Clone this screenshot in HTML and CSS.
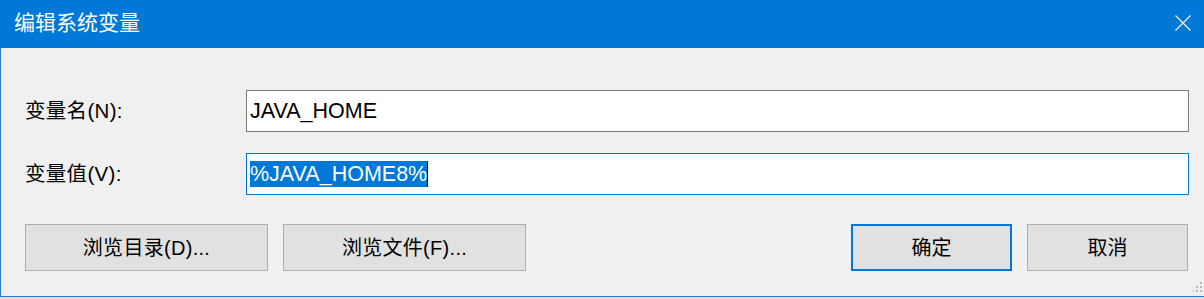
FILE: index.html
```html
<!DOCTYPE html>
<html lang="zh-CN">
<head>
    <meta charset="UTF-8">
    <title>编辑系统变量</title>
    <link rel="stylesheet" href="styles.css">
</head>
<body>
    <div class="window">
        <div class="titlebar">
            <span class="title">编辑系统变量</span>
            <span class="close">
                <svg width="16" height="16" viewBox="0 0 16 16">
                    <path d="M0.5 0.5 L15.5 15.5 M15.5 0.5 L0.5 15.5" stroke="#fff" stroke-width="1.1" fill="none"/>
                </svg>
            </span>
        </div>

        <div class="content">
            <div class="fields">
                <label class="label">变量名(N):</label>
                <div class="input">JAVA_HOME</div>

                <label class="label">变量值(V):</label>
                <div class="input focused"><span class="selected">%JAVA_HOME8%</span><span class="caret"></span></div>
            </div>

            <div class="buttons">
                <button class="btn wide">浏览目录(D)...</button>
                <button class="btn wide">浏览文件(F)...</button>
                <span class="spacer"></span>
                <button class="btn default">确定</button>
                <button class="btn">取消</button>
            </div>

            <!-- resize grip -->
            <svg class="grip" width="10" height="12" viewBox="0 0 10 12">
                <rect x="7" y="0" width="2" height="2" fill="#b8b8b8"/>
                <rect x="7" y="4" width="2" height="2" fill="#b8b8b8"/>
                <rect x="3" y="4" width="2" height="2" fill="#b8b8b8"/>
                <rect x="7" y="8" width="2" height="2" fill="#b8b8b8"/>
                <rect x="3" y="8" width="2" height="2" fill="#b8b8b8"/>
                <rect x="-1" y="8" width="2" height="2" fill="#b8b8b8"/>
            </svg>
        </div>
    </div>
</body>
</html>
```

FILE: styles.css
```css
* {
    margin: 0;
    padding: 0;
    box-sizing: border-box;
}
body {
    font-family: 'Liberation Sans', 'Noto Sans CJK SC', sans-serif;
    background-color: #dcdcdc;
    color: #000;
    width: 1204px;
    height: 299px;
    overflow: hidden;
}
.window {
    display: flex;
    flex-direction: column;
    height: 297px;
}
.titlebar {
    height: 48px;
    background-color: #0078d7;
    color: #fff;
    display: flex;
    align-items: center;
    justify-content: space-between;
    padding: 0 13px 2px 14px;
}
.title {
    font-size: 21px;
    line-height: 24px;
}
.close {
    display: flex;
}
.content {
    position: relative;
    flex: 1;
    background-color: #f0f0f0;
    border-left: 1px solid #2b7ccf;
    border-bottom: 1px solid #2b7ccf;
    padding: 42px 15px 0 24px;
}
.fields {
    display: grid;
    grid-template-columns: 221px 1fr;
    row-gap: 21px;
    align-items: center;
}
.label {
    font-size: 20.5px;
    line-height: 24px;
    letter-spacing: 0.3px;
}
.input {
    height: 42px;
    background-color: #fff;
    border: 1px solid #7a7a7a;
    padding: 0 3px;
    font-size: 21.5px;
    line-height: 38px;
    display: flex;
    align-items: center;
}
.input.focused {
    border-color: #0078d7;
}
.selected {
    background-color: #0078d7;
    color: #fff;
    line-height: 26px;
    height: 26px;
}
.caret {
    width: 1px;
    height: 26px;
    background-color: #000;
}
.buttons {
    display: flex;
    gap: 15px;
    margin-top: 29px;
    padding-right: 1px;
}
.spacer {
    flex: 1;
}
.btn {
    height: 47px;
    width: 161px;
    background-color: #e1e1e1;
    border: 1px solid #adadad;
    font-family: 'Liberation Sans', 'Noto Sans CJK SC', sans-serif;
    font-size: 20px;
    line-height: 24px;
    color: #000;
}
.btn.wide {
    width: 243px;
    letter-spacing: 0.3px;
}
.btn.default {
    border: 2px solid #0078d7;
}
.grip {
    position: absolute;
    right: 1px;
    bottom: 2px;
}
```
